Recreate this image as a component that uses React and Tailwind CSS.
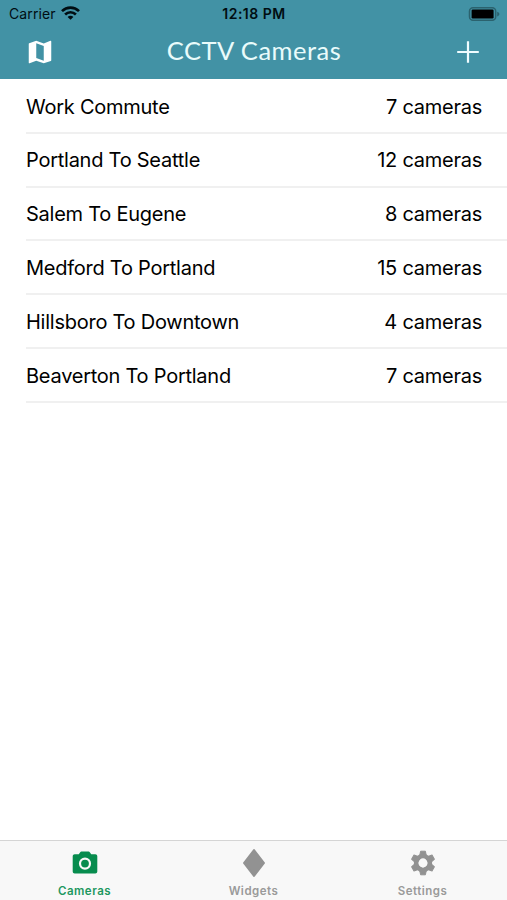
import React from "react";
import { MdMap } from "react-icons/md";

const routes = [
  { name: "Work Commute", count: 7 },
  { name: "Portland To Seattle", count: 12 },
  { name: "Salem To Eugene", count: 8 },
  { name: "Medford To Portland", count: 15 },
  { name: "Hillsboro To Downtown", count: 4 },
  { name: "Beaverton To Portland", count: 7 },
];

const WifiIcon = () => (
  <svg width="19" height="14" viewBox="0 0 19 14" fill="none" stroke="#000d12" strokeWidth="2.7">
    <path d="M1 5.1C5.8.4 13.2.4 18 5.1" />
    <path d="M4.1 8.4c3.1-2.9 7.7-2.9 10.8 0" />
    <path d="M9.5 13.8L6.6 10.9c1.6-1.5 4.2-1.5 5.8 0z" fill="#000d12" stroke="none" />
  </svg>
);

const BatteryIcon = () => (
  <svg width="32" height="15" viewBox="0 0 32 15">
    <rect x="1.5" y="0.8" width="26.2" height="12.4" rx="3.5" fill="none" stroke="#2b626e" strokeWidth="1.5" />
    <rect x="3.6" y="2.6" width="22" height="8.8" rx="1.2" fill="#000" />
    <path d="M29.2 4.8c1.6.6 2.2 1.4 2.2 2.3s-.6 1.8-2.2 2.4z" fill="#2b626e" />
  </svg>
);

const CameraIcon = () => (
  <svg width="26" height="24" viewBox="0 0 26 24">
    <path
      d="M9.4 .6h7.2c.5 0 .9.2 1.2.6L19.2 3.2h4.1c1.1 0 2 .9 2 2v15.4c0 1.1-.9 2-2 2H2.7c-1.1 0-2-.9-2-2V5.2c0-1.1.9-2 2-2h4.1l1.4-2c.3-.4.7-.6 1.2-.6z"
      fill="#078c4e"
    />
    <circle cx="13" cy="12.6" r="5" fill="none" stroke="#f8f8f8" strokeWidth="2.2" />
  </svg>
);

const DiamondIcon = () => (
  <svg width="24" height="30" viewBox="0 0 24 30">
    <path d="M12 2L22 15 12 28 2 15z" fill="#929292" stroke="#929292" strokeWidth="2" strokeLinejoin="round" />
  </svg>
);

const GearIcon = () => (
  <svg width="26" height="26" viewBox="-13 -13 26 26">
    <g fill="#929292" stroke="#929292" strokeWidth="1" strokeLinejoin="round">
      <path d="M-2.4-11.8h4.8l1 5h-6.8zM-2.4 11.8h4.8l1-5h-6.8z" />
      <path d="M-2.4-11.8h4.8l1 5h-6.8zM-2.4 11.8h4.8l1-5h-6.8z" transform="rotate(60)" />
      <path d="M-2.4-11.8h4.8l1 5h-6.8zM-2.4 11.8h4.8l1-5h-6.8z" transform="rotate(120)" />
    </g>
    <circle r="6.8" fill="none" stroke="#929292" strokeWidth="4.8" />
    <circle r="4.4" fill="#f8f8f8" />
  </svg>
);

const App = () => {
  return (
    <div className="flex h-[900px] w-[507px] flex-col bg-white font-['Inter',sans-serif] text-black">
      {/* HEADER */}
      <header className="h-[79px] bg-[#4292a5]">
        <div className="grid h-7 grid-cols-3 items-center pr-[7px] pl-[9px] text-[#000d12]">
          <div className="-mt-[2px] flex items-center gap-[5px]">
            <span className="text-[14px] tracking-[0.1px]">Carrier</span>
            <WifiIcon />
          </div>
          <span className="pr-[1px] pb-[2px] text-center text-[14px] font-semibold tracking-[0.5px]">12:18 PM</span>
          <div className="flex justify-end">
            <BatteryIcon />
          </div>
        </div>
        <div className="flex h-[48px] items-center justify-between pr-[27px] pl-[25px]">
          <MdMap className="text-[30px] text-white" />
          <h1 className="pr-[3px] pb-[3px] font-['Lato',sans-serif] text-[25.5px] font-normal tracking-[0.5px] text-[#e9fbfb]">
            CCTV Cameras
          </h1>
          <svg width="24" height="24" viewBox="0 0 24 24" stroke="#effcff" strokeWidth="2.2">
            <path d="M1.2 12h21.6M12 1.2v21.6" />
          </svg>
        </div>
      </header>

      {/* ROUTES */}
      <ul className="flex-1 pt-[1px] pl-[26px]">
        {routes.map((route) => (
          <li
            key={route.name}
            className="flex h-[53.8px] items-center justify-between border-b-2 border-[#f0f0f0] pt-[1.6px] pr-[25px] text-[20px] tracking-[-0.25px]"
          >
            <span>{route.name}</span>
            <span>{route.count} cameras</span>
          </li>
        ))}
      </ul>

      {/* TAB BAR */}
      <nav className="grid h-[60px] grid-cols-3 border-t border-[#d5d5d5] bg-[#f8f8f8] text-[11.5px] font-semibold tracking-[0.5px] text-[#9a9a9a]">
        <div className="flex flex-col items-center text-[#1d9760]">
          <div className="flex h-[43px] items-center">
            <CameraIcon />
          </div>
          <span className="leading-[14px]">Cameras</span>
        </div>
        <div className="flex flex-col items-center">
          <div className="flex h-[43px] items-center">
            <DiamondIcon />
          </div>
          <span className="leading-[14px]">Widgets</span>
        </div>
        <div className="flex flex-col items-center">
          <div className="flex h-[43px] items-center">
            <GearIcon />
          </div>
          <span className="leading-[14px]">Settings</span>
        </div>
      </nav>
    </div>
  );
};

export default App;
